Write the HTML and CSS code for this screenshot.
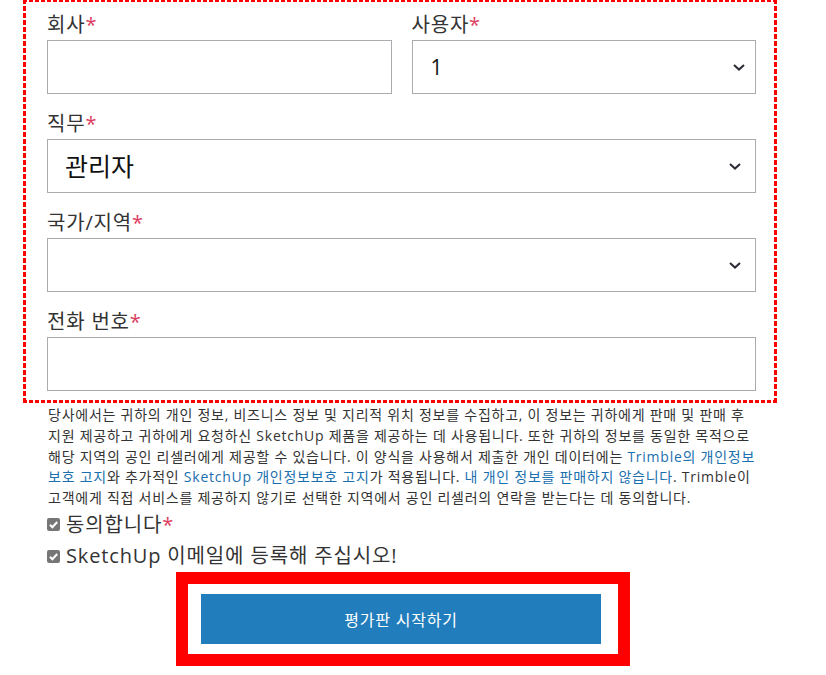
FILE: index.html
```html
<!DOCTYPE html>
<html lang="ko">
<head>
<meta charset="utf-8">
<title>평가판 시작하기</title>
<link rel="stylesheet" href="styles.css">
</head>
<body>
<div class="page">
  <div class="fields">
    <div class="row">
      <div class="field">
        <label class="label">회사<span class="req">*</span></label>
        <input class="box" type="text">
      </div>
      <div class="field">
        <label class="label">사용자<span class="req">*</span></label>
        <div class="box select"><span class="value small">1</span>
          <svg class="chev chev-near" width="12" height="7" viewBox="0 0 12 7"><path d="M1 1 L6 5.6 L11 1" fill="none" stroke="#2b2b33" stroke-width="2"/></svg>
        </div>
      </div>
    </div>
    <div class="field">
      <label class="label">직무<span class="req">*</span></label>
      <div class="box select"><span class="value">관리자</span>
        <svg class="chev" width="12" height="7" viewBox="0 0 12 7"><path d="M1 1 L6 5.6 L11 1" fill="none" stroke="#2b2b33" stroke-width="2"/></svg>
      </div>
    </div>
    <div class="field">
      <label class="label">국가/지역<span class="req">*</span></label>
      <div class="box select"><span class="value"></span>
        <svg class="chev" width="12" height="7" viewBox="0 0 12 7"><path d="M1 1 L6 5.6 L11 1" fill="none" stroke="#2b2b33" stroke-width="2"/></svg>
      </div>
    </div>
    <div class="field last">
      <label class="label">전화 번호<span class="req">*</span></label>
      <input class="box" type="text">
    </div>
  </div>

  <p class="notice">당사에서는 귀하의 개인 정보, 비즈니스 정보 및 지리적 위치 정보를 수집하고, 이 정보는 귀하에게 판매 및 판매 후<br>지원 제공하고 귀하에게 요청하신 SketchUp 제품을 제공하는 데 사용됩니다. 또한 귀하의 정보를 동일한 목적으로<br>해당 지역의 공인 리셀러에게 제공할 수 있습니다. 이 양식을 사용해서 제출한 개인 데이터에는 <a class="link">Trimble의 개인정보<br>보호 고지</a>와 추가적인 <a class="link">SketchUp 개인정보보호 고지</a>가 적용됩니다. <a class="link">내 개인 정보를 판매하지 않습니다</a>. Trimble이<br>고객에게 직접 서비스를 제공하지 않기로 선택한 지역에서 공인 리셀러의 연락을 받는다는 데 동의합니다.</p>

  <div class="check-row">
    <span class="check"><svg width="13" height="13" viewBox="0 0 13 13"><path d="M3 6.8 L5.4 9.2 L10.2 4" fill="none" stroke="#fff" stroke-width="2"/></svg></span>
    <span class="check-text">동의합니다<span class="req">*</span></span>
  </div>
  <div class="check-row">
    <span class="check"><svg width="13" height="13" viewBox="0 0 13 13"><path d="M3 6.8 L5.4 9.2 L10.2 4" fill="none" stroke="#fff" stroke-width="2"/></svg></span>
    <span class="check-text">SketchUp 이메일에 등록해 주십시오!</span>
  </div>

  <div class="submit-frame">
    <button class="submit" type="button">평가판 시작하기</button>
  </div>
</div>
</body>
</html>
```
FILE: styles.css
```css
html, body {
  margin: 0;
  padding: 0;
  background: #fff;
}
body {
  font-family: "Open Sans", "Noto Sans CJK KR", sans-serif;
  color: #333;
}
.page {
  width: 709px;
  margin-left: 47px;
}
.fields {
  margin-top: -1px;
  margin-left: -24px;
  width: 709px;
  border: 3px solid transparent;
  padding: 8px 18px 9px 21px;
  background-origin: border-box;
  background-clip: border-box;
  background-repeat: no-repeat;
  background-image:
    repeating-linear-gradient(90deg, #ff0000 0 4px, transparent 4px 6px),
    repeating-linear-gradient(90deg, #ff0000 0 4px, transparent 4px 6px),
    repeating-linear-gradient(180deg, #ff0000 0 5px, transparent 5px 7px),
    repeating-linear-gradient(180deg, #ff0000 0 5px, transparent 5px 7px);
  background-size: 100% 3px, 100% 3px, 3px 100%, 3px 100%;
  background-position: left top, left bottom, left top, right top;
}
.row {
  display: flex;
  gap: 20px;
}
.row .field {
  flex: 1 1 0;
  min-width: 0;
}
.field {
  margin-bottom: 15px;
}
.field.last {
  margin-bottom: 0;
}
.label {
  display: block;
  font-size: 20px;
  line-height: 30px;
  letter-spacing: 0.8px;
  color: #333;
}
.req {
  color: #dc3c5e;
}
.box {
  display: block;
  box-sizing: border-box;
  width: 100%;
  height: 54px;
  margin: 0;
  border: 1px solid #aaaaaf;
  border-radius: 0;
  background: #fff;
  font-family: inherit;
  outline: none;
}
.select {
  display: flex;
  align-items: center;
  justify-content: space-between;
  padding: 0 14px 0 17px;
}
.value {
  font-size: 25px;
  color: #111;
  line-height: 1;
}
.value.small {
  font-size: 21px;
  padding-left: 1px;
}
.chev {
  display: block;
}
.chev-near {
  margin-right: -4px;
}
.notice {
  margin: 2px 0 0 1px;
  font-size: 14px;
  line-height: 20.75px;
  letter-spacing: 0.75px;
  white-space: nowrap;
  color: #333;
}
.link {
  color: #1a6fae;
  text-decoration: none;
}
.check-row {
  display: flex;
  align-items: center;
  height: 31.5px;
}
.check {
  display: block;
  width: 13px;
  height: 13px;
  border-radius: 2px;
  background: #767676;
}
.check svg {
  display: block;
}
.check-text {
  margin-left: 6px;
  font-size: 20px;
  letter-spacing: 0.85px;
  color: #333;
  line-height: 1;
}
.submit-frame {
  margin-left: 129px;
  border: 12px solid #ff0000;
  padding: 10px 17px 10px 13px;
  box-sizing: content-box;
  width: 400px;
  background: #fff;
}
.submit {
  display: block;
  width: 400px;
  height: 50px;
  margin: 0;
  border: 0;
  background: #227dbc;
  color: #fff;
  font-family: "Open Sans", "Noto Sans CJK KR", sans-serif;
  font-size: 16px;
  letter-spacing: 0.8px;
  cursor: pointer;
}
```
